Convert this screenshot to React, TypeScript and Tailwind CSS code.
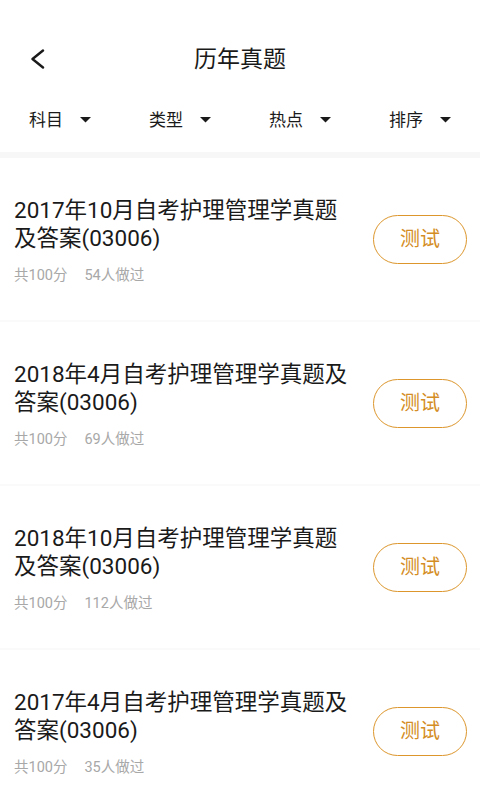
import React from "react";

const items = [
  { title: "2017年10月自考护理管理学真题及答案(03006)", count: "54人做过" },
  { title: "2018年4月自考护理管理学真题及答案(03006)", count: "69人做过" },
  { title: "2018年10月自考护理管理学真题及答案(03006)", count: "112人做过" },
  { title: "2017年4月自考护理管理学真题及答案(03006)", count: "35人做过" },
];

const filters = ["科目", "类型", "热点", "排序"];

function Caret() {
  return (
    <svg width="11" height="6" viewBox="0 0 11 6">
      <polygon points="0,0 11,0 5.5,5.5" fill="#1a1a1a" />
    </svg>
  );
}

export default function App() {
  return (
    <div
      className="w-[480px] h-[800px] overflow-hidden bg-white text-[#1a1a1a]"
      style={{ fontFamily: "Roboto, 'Noto Sans CJK SC', sans-serif" }}
    >
      <div className="pt-[24px]">
        <div className="grid grid-cols-[1fr_auto_1fr] items-center h-[70px]">
          <div className="pl-[30px] flex items-center">
            <svg width="16" height="20" viewBox="0 0 16 20">
              <polyline
                points="13,1.5 2.5,10 13,18.5"
                fill="none"
                stroke="#1a1a1a"
                strokeWidth="2.4"
                strokeLinecap="round"
                strokeLinejoin="round"
              />
            </svg>
          </div>
          <div className="text-[23px] leading-none">历年真题</div>
          <div />
        </div>
        <div className="flex h-[51px] items-center pt-[1px]">
          {filters.map((f) => (
            <div key={f} className="flex-1 flex items-center justify-center gap-[17px]">
              <span className="text-[17px] leading-none">{f}</span>
              <Caret />
            </div>
          ))}
        </div>
        <div className="h-[7px]" />
        <div className="h-[6px] bg-[#f7f7f7]" />
      </div>
      <div className="flex flex-col">
        {items.map((it, i) => (
          <div key={i} className="flex flex-col">
            <div className="h-[162px] flex items-center pl-[14px] pr-[13px]">
              <div className="flex-1 self-start pt-[38px]">
                <div className="text-[22.5px] leading-[28px] text-[#1a1a1a] pr-[18px]">{it.title}</div>
                <div className="mt-[14px] flex gap-[17px] text-[14.5px] leading-[20px] text-[#a8a8a8]">
                  <span>共100分</span>
                  <span>{it.count}</span>
                </div>
              </div>
              <div className="w-[94px] h-[49px] rounded-full border-[1.5px] border-[#dc962c] flex items-center justify-center text-[20px] text-[#d48d25] shrink-0">
                测试
              </div>
            </div>
            <div className="h-[2px] bg-[#fafafa]" />
          </div>
        ))}
      </div>
    </div>
  );
}
